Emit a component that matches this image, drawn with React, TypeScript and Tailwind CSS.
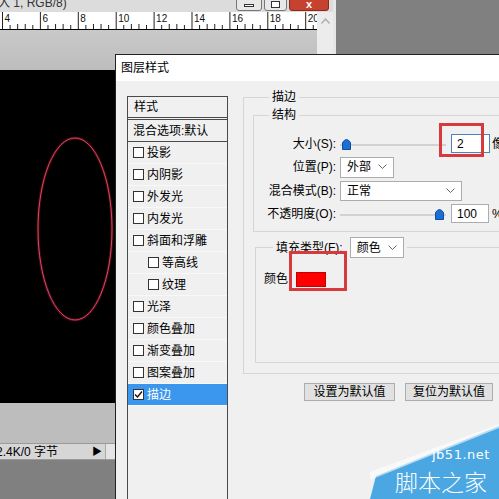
import React from 'react';

const items = [
  { label: '投影' },
  { label: '内阴影' },
  { label: '外发光' },
  { label: '内发光' },
  { label: '斜面和浮雕' },
  { label: '等高线', indent: true },
  { label: '纹理', indent: true },
  { label: '光泽' },
  { label: '颜色叠加' },
  { label: '渐变叠加' },
  { label: '图案叠加' },
  { label: '描边', checked: true },
];

const Chevron = () => (
  <svg width="9" height="6" viewBox="0 0 9 6">
    <path d="M0.5 0.5 L4.5 4.5 L8.5 0.5" fill="none" stroke="#666" strokeWidth="1" />
  </svg>
);

const Thumb = () => (
  <svg width="9" height="12" viewBox="0 0 9 12">
    <path d="M0.5 11.5 V4.5 Q4.5 -1.5 8.5 4.5 V11.5 Z" fill="#1c6ed4" stroke="#0e4f9c" strokeWidth="1" />
  </svg>
);

const Check = ({ checked }: { checked?: boolean }) => (
  <span className="w-[11px] h-[11px] border border-[#333] bg-white flex items-center justify-center shrink-0">
    {checked && (
      <svg width="9" height="9" viewBox="0 0 9 9">
        <path d="M1 4.5 L3.5 7 L8 1.5" fill="none" stroke="#111" strokeWidth="1.4" />
      </svg>
    )}
  </span>
);

const Slider = ({ at }: { at: 'left' | 'right' }) => (
  <div
    className={`w-[106px] h-[14px] flex items-center bg-[linear-gradient(to_bottom,transparent_7px,#d2d2d2_7px,#d2d2d2_9px,transparent_9px)] ${
      at === 'left' ? 'justify-start pl-[2px]' : 'justify-end pr-[2px]'
    }`}
  >
    <Thumb />
  </div>
);

const Select = ({ w, h, text }: { w: string; h: string; text: string }) => (
  <div className={`${w} ${h} border border-[#acacac] bg-white flex items-center justify-between pl-[6px] pr-[6px]`}>
    <span>{text}</span>
    <Chevron />
  </div>
);

const Ruler = () => {
  const labels = [4, 6, 8, 10, 12, 14, 16, 18, 20];
  const step = 37.9;
  return (
    <svg width="317" height="17" viewBox="0 0 317 17" className="block">
      {labels.map((n, i) => {
        const x = 2.5 + i * step;
        return (
          <g key={n}>
            <line x1={x} y1="0" x2={x} y2="17" stroke="#222" strokeWidth="1" />
            {[1, 2, 3, 4].map(k => (
              <line
                key={k}
                x1={x + (k * step) / 5}
                y1={k === 2 || k === 3 ? 12 : 13}
                x2={x + (k * step) / 5}
                y2="17"
                stroke="#222"
                strokeWidth="1"
              />
            ))}
            <text x={x + 2} y="10" fontSize="10" fontFamily="Liberation Sans, sans-serif" fill="#111">
              {n}
            </text>
          </g>
        );
      })}
    </svg>
  );
};

const App: React.FC = () => {
  return (
    <div className="relative w-[499px] h-[499px] overflow-hidden bg-[#808080] text-[12px] text-black font-['Liberation_Sans','Noto_Sans_CJK_SC',sans-serif]">
      {/* Document window */}
      <div className="absolute left-0 top-0 w-[336px] h-[460px] flex flex-col border-r-[3px] border-[#e6e6e6]">
        <div className="h-[12px] shrink-0 bg-[#dcdcdc] flex items-start justify-between overflow-hidden">
          <span className="mt-[-6px] ml-[-2px] text-[12px] text-[#333]">入 1, RGB/8)</span>
          <div className="flex mr-[4px] mt-[-6px] gap-[2px]">
            <div className="w-[26px] h-[17px] border border-[#777] rounded-[3px] bg-[#e8e8e8] flex items-end justify-center pb-[3px]">
              <div className="w-[10px] h-[3px] border border-[#333] bg-white" />
            </div>
            <div className="w-[23px] h-[17px] border border-[#777] rounded-[3px] bg-[#e8e8e8] flex items-end justify-center pb-[2px]">
              <div className="w-[9px] h-[7px] border border-[#333] bg-white" />
            </div>
            <div className="w-[40px] h-[17px] border border-[#8a2a1c] rounded-[3px] bg-[#c7412f] flex items-end justify-center text-white text-[11px] font-bold leading-[11px]">
              x
            </div>
          </div>
        </div>
        <div className="flex flex-1 min-h-0">
          <div className="w-[317px] flex flex-col">
            <div className="h-[18px] shrink-0 bg-white border-b border-black">
              <Ruler />
            </div>
            <div className="h-[40px] shrink-0 bg-[linear-gradient(to_bottom,#c9c9c9,#bdbdbd)]" />
            <div className="h-[333px] shrink-0 bg-black">
              <svg width="317" height="333" viewBox="0 0 317 333">
                <ellipse cx="75" cy="159" rx="37" ry="91" fill="none" stroke="#7a1020" strokeWidth="3" opacity="0.5" />
                <ellipse cx="75" cy="159" rx="37" ry="91" fill="none" stroke="#d84a62" strokeWidth="1" />
              </svg>
            </div>
            <div className="flex-1 bg-[#bdbdbd]" />
            <div className="h-[17px] shrink-0 bg-[#d6d6d6] border-t border-b border-[#9a9a9a] flex items-center">
              <span className="ml-[-4px] w-[96px] text-[12px] leading-none">2.4K/0 字节</span>
              <span className="text-[10px] leading-none">▶</span>
              <span className="ml-[3px] h-full w-[10px] border-l border-[#aaa] bg-[#e4e4e4]" />
            </div>
          </div>
          <div className="w-[16px] bg-[#ececec] flex flex-col items-center pt-[6px]">
            <svg width="9" height="6" viewBox="0 0 9 6">
              <path d="M0.5 5.5 L4.5 1 L8.5 5.5" fill="none" stroke="#aaa" strokeWidth="1.2" />
            </svg>
          </div>
        </div>
      </div>

      {/* Layer style dialog */}
      <div className="absolute left-[115px] top-[54px] w-[420px] h-[480px] border-l border-t border-[#222] bg-[#f0f0f0] flex flex-col">
        <div className="h-[26px] shrink-0 bg-white flex items-center pl-[5px] text-[12px]">图层样式</div>
        <div className="flex items-start pl-[11px] pt-[8px] shrink-0">
          {/* Style list */}
          <div className="mt-[7px] w-[101px] h-[420px] border border-[#4a4a4a] bg-[#f0f0f0] flex flex-col">
            <div className="h-[23px] shrink-0 flex items-center pl-[6px] border-b-[3px] border-double border-[#4a4a4a]">样式</div>
            <div className="h-[22px] shrink-0 flex items-center pl-[5px] border-b border-[#4a4a4a] whitespace-nowrap">混合选项:默认</div>
            {items.map(it => (
              <div
                key={it.label}
                className={`h-[22px] shrink-0 flex items-center gap-[3px] border-b border-[#f8f8f8] ${it.indent ? 'pl-[20px]' : 'pl-[5px]'} ${
                  it.checked ? 'bg-[#3b97ee] text-white' : ''
                }`}
              >
                <Check checked={it.checked} />
                <span>{it.label}</span>
              </div>
            ))}
          </div>

          {/* Right column */}
          <div className="ml-[15px] w-[290px] flex flex-col">
            <fieldset className="h-[285px] border border-[#d5d5d5] pl-[9px]">
              <legend className="ml-[16px] px-[3px] leading-[16px]">描边</legend>
              <fieldset className="mt-[2px] h-[125px] border border-[#d5d5d5]">
                <legend className="ml-[15px] px-[3px] leading-[16px]">结构</legend>
                <div className="pt-[9px] flex flex-col">
                  <div className="h-[23px] flex items-center">
                    <span className="w-[82px] text-right whitespace-nowrap">大小(S):</span>
                    <div className="ml-[4px] flex items-center">
                      <Slider at="left" />
                      <div className="ml-[5px] w-[39px] h-[19px] border border-[#4f83bb] bg-white flex items-center pl-[5px]">2</div>
                      <span className="ml-[2px]">像</span>
                    </div>
                  </div>
                  <div className="h-[24px] flex items-center">
                    <span className="w-[82px] text-right whitespace-nowrap">位置(P):</span>
                    <div className="ml-[4px]">
                      <Select w="w-[54px]" h="h-[21px]" text="外部" />
                    </div>
                  </div>
                  <div className="h-[23px] flex items-center">
                    <span className="w-[82px] text-right whitespace-nowrap">混合模式(B):</span>
                    <div className="ml-[4px]">
                      <Select w="w-[122px]" h="h-[20px]" text="正常" />
                    </div>
                  </div>
                  <div className="h-[23px] flex items-center">
                    <span className="w-[82px] text-right whitespace-nowrap">不透明度(O):</span>
                    <div className="ml-[4px] flex items-center">
                      <Slider at="right" />
                      <div className="ml-[5px] w-[38px] h-[19px] border border-[#abadb3] bg-white flex items-center pl-[5px]">100</div>
                      <span className="ml-[3px]">%</span>
                    </div>
                  </div>
                </div>
              </fieldset>
              <fieldset className="mt-[5px] ml-[2px] h-[126px] border border-[#d5d5d5]">
                <legend className="ml-[17px] px-[3px] flex items-center gap-[7px]">
                  <span className="whitespace-nowrap">填充类型(F):</span>
                  <Select w="w-[54px]" h="h-[21px]" text="颜色" />
                </legend>
                <div className="pt-[12px] pl-[8px] flex items-center gap-[8px]">
                  <span>颜色</span>
                  <div className="w-[30px] h-[15px] bg-[#ff0000] border border-[#c40000]" />
                </div>
              </fieldset>
            </fieldset>
            <div className="mt-[9px] pl-[61px] flex gap-[10px]">
              <div className="w-[91px] h-[18px] border border-[#adadad] bg-[#e1e1e1] flex items-center justify-center">设置为默认值</div>
              <div className="w-[88px] h-[18px] border border-[#adadad] bg-[#e1e1e1] flex items-center justify-center">复位为默认值</div>
            </div>
          </div>
        </div>
      </div>

      {/* Red annotation boxes */}
      <div className="absolute left-[439px] top-[123px] w-[45px] h-[34px] border-[3px] border-[#d8393c]" />
      <div className="absolute left-[289px] top-[251px] w-[58px] h-[40px] border-[3px] border-[#d8393c]" />

      {/* Watermark */}
      <svg className="absolute left-[370px] top-[420px]" width="129" height="79" viewBox="0 0 129 79">
        <polygon points="0,79 6,56 129,6 129,79" fill="#4aa7e2" />
        <polygon points="0,60 129,8 129,4 0,52" fill="#ffffff" opacity="0.6" />
      </svg>
      <span className="absolute left-[432px] top-[448px] text-[13px] leading-[14px] text-white font-['DejaVu_Sans',sans-serif] tracking-[0.5px]">jb51.net</span>
      <span className="absolute left-[395px] top-[468px] text-[23px] leading-[26px] text-white font-['Noto_Sans_CJK_SC',sans-serif] font-light">脚本之家</span>
    </div>
  );
};

export default App;
